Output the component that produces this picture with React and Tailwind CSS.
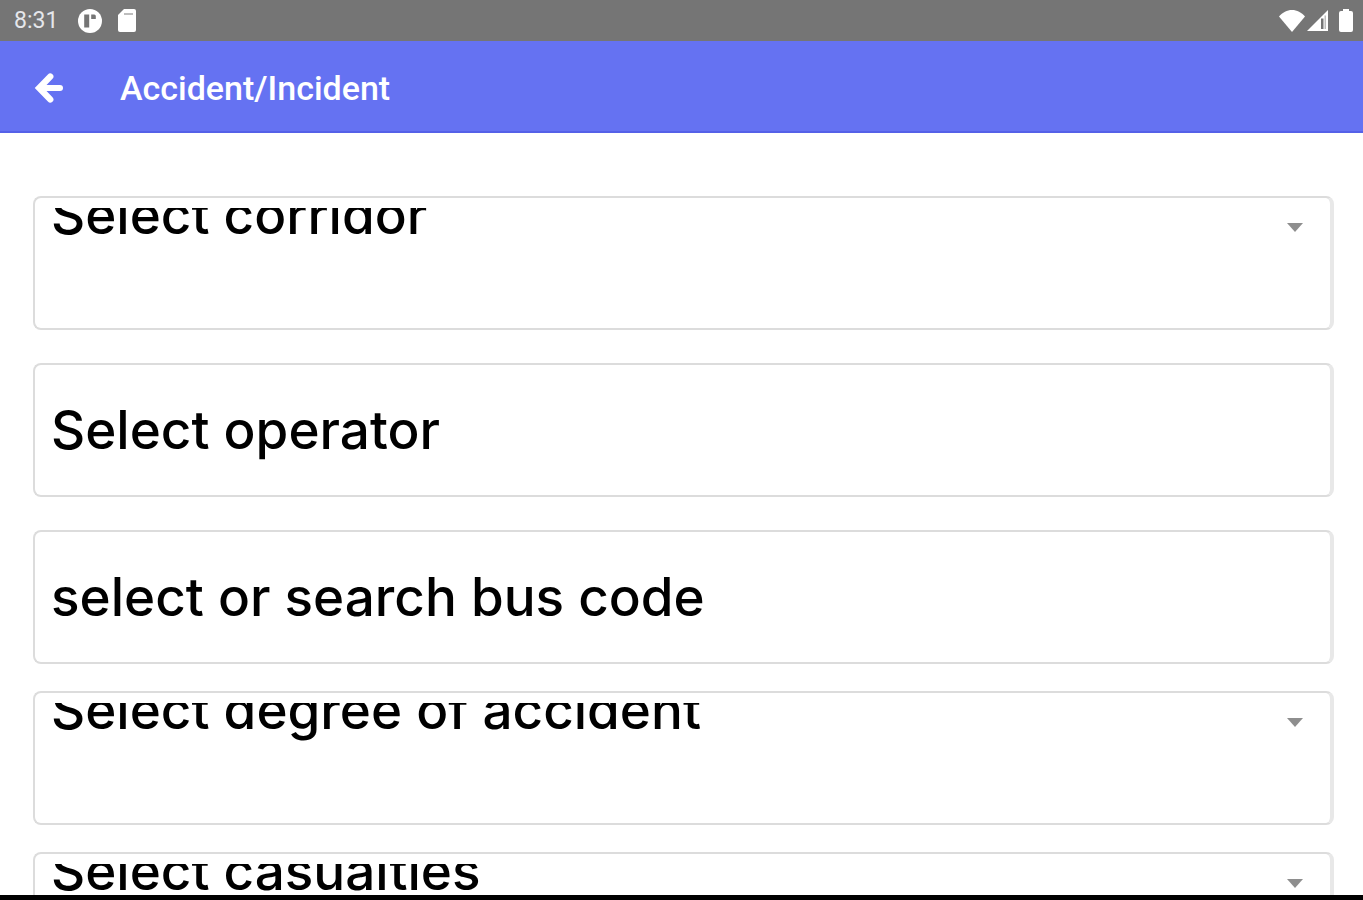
import { useState } from "react"

const BackIcon = () => (
  <svg className="w-8 h-8" viewBox="0 0 32 32" fill="none" stroke="currentColor" strokeLinecap="round" strokeLinejoin="miter">
    <path strokeWidth="6.4" d="M17.2 4.6L6.2 16l11 11.4" />
    <path strokeWidth="6" d="M8 16h19" />
  </svg>
)

const AppBadgeIcon = () => (
  <svg className="w-6 h-6" viewBox="0 0 24 24">
    <circle cx="12" cy="12" r="12" fill="#fff" />
    <path fill="#757575" d="M6.2 5.5h5v13h-5zM13.2 5.5h3a1.6 1.6 0 0 1 1.6 1.6v3h-4.6z" />
  </svg>
)

const SdCardIcon = () => (
  <svg className="w-[18px] h-[23px]" viewBox="0 0 18 23">
    <path fill="#fff" d="M6 0h10a2 2 0 0 1 2 2v19a2 2 0 0 1-2 2H2a2 2 0 0 1-2-2V6z" />
    <path stroke="#bdbdbd" strokeWidth="2" d="M6 5h9" />
  </svg>
)

const WifiIcon = () => (
  <svg className="w-[26px] h-[22px]" viewBox="0 0 26 22">
    <path fill="#fff" d="M13 22L0 6.5C3.5 2.5 8 0 13 0s9.5 2.5 13 6.500z" />
  </svg>
)

const SignalIcon = () => (
  <svg className="w-[21px] h-[21px]" viewBox="0 0 21 21">
    <path fill="#fff" d="M0 21L21 0v21z" />
    <path fill="#757575" d="M14 8.500h2.500V19H14z" />
    <path fill="#bdbdbd" d="M17.500 5.500H19V19h-1.500z" />
  </svg>
)

const BatteryIcon = () => (
  <svg className="w-[14px] h-[23px]" viewBox="0 0 14 23">
    <path fill="#fff" d="M4 0h6v2h2a2 2 0 0 1 2 2v17a2 2 0 0 1-2 2H2a2 2 0 0 1-2-2V4a2 2 0 0 1 2-2h2z" />
  </svg>
)

const boxClass = "h-[134px] shrink-0 rounded-lg border-2 border-r-4 border-[#dcdcdc] border-r-[#e8e8e8]"
const fieldClass = "block w-full appearance-none bg-transparent px-4 text-[53px] font-medium text-black outline-none"

function SelectBox({ label }) {
  return (
    <div className={`${boxClass} pt-[10px]`}>
      {/* the row is shorter than the text, so the top of the label is cut */}
      <div className="flex items-start overflow-hidden">
        <select aria-label={label} className={`${fieldClass} h-24 -mt-10`}>
          <option>{label}</option>
        </select>
        <svg className="w-4 h-[9px] mt-[15px] mr-[27px] shrink-0" viewBox="0 0 16 9">
          <path fill="#8e8e8e" d="M0 0h16L8 9z" />
        </svg>
      </div>
    </div>
  )
}

function SearchBox({ label }) {
  const [value, setValue] = useState("")

  return (
    <div className={boxClass}>
      <input
        type="text"
        aria-label={label}
        placeholder={label}
        value={value}
        onChange={(e) => setValue(e.target.value)}
        className={`${fieldClass} h-full placeholder:text-black placeholder:opacity-100`}
      />
    </div>
  )
}

export default function App() {
  return (
    <div className="flex flex-col h-screen bg-white font-['Inter',sans-serif]">
      {/* Status bar */}
      <div className="flex items-center justify-between h-[41px] shrink-0 bg-[#757575] pl-[14px] pr-[10px] text-white font-['Roboto',sans-serif]">
        <div className="flex items-center">
          <span className="text-[23px] leading-10 text-gray-200">8:31</span>
          <span className="ml-5 mr-4"><AppBadgeIcon /></span>
          <SdCardIcon />
        </div>
        <div className="flex items-center">
          <WifiIcon />
          <span className="ml-[2px] mr-[11px]"><SignalIcon /></span>
          <BatteryIcon />
        </div>
      </div>

      {/* Header */}
      <header className="flex items-center h-[92px] shrink-0 bg-[#6572f2] border-b-2 border-[#5561e8] pt-1 pl-[33px] text-white font-['Roboto',sans-serif]">
        <button type="button" aria-label="Back" className="mr-[55px]">
          <BackIcon />
        </button>
        <h1 className="text-[34px] font-medium">Accident/Incident</h1>
      </header>

      {/* Form */}
      <main className="flex-1 min-h-0 overflow-hidden pt-[63px] pl-[33px] pr-[29px]">
        <form className="flex flex-col gap-[27px]">
          <SelectBox label="Select corridor" />
          <div className="flex flex-col gap-[33px] pt-[6px]">
            <SearchBox label="Select operator" />
            <SearchBox label="select or search bus code" />
          </div>
          <SelectBox label="Select degree of accident" />
          <SelectBox label="Select casualties" />
        </form>
      </main>

      <div className="h-[5px] shrink-0 bg-black" />
    </div>
  )
}
